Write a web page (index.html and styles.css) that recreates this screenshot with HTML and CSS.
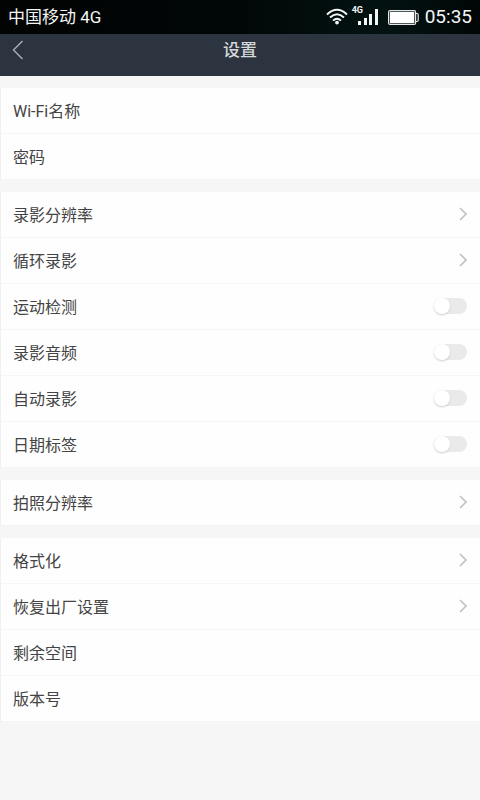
FILE: index.html
```html
<!DOCTYPE html>
<html lang="zh-CN">
<head>
<meta charset="utf-8">
<meta name="viewport" content="width=device-width, initial-scale=1">
<title>设置</title>
<link rel="stylesheet" href="styles.css">
</head>
<body>
<div class="status">
  <span class="carrier">中国移动 4G</span>
  <div class="indicators">
    <svg class="wifi" viewBox="0 0 22 18" width="22" height="18" aria-hidden="true">
      <g fill="none" stroke="#f4f6f6" stroke-width="2">
        <path d="M1 6.4Q11-2.8 21 6.4"/>
        <path d="M4 9.6Q11 3 18 9.6"/>
        <path d="M7 12.6Q11 8.8 15 12.6"/>
      </g>
      <circle cx="11" cy="14.6" r="1.9" fill="#f4f6f6"/>
    </svg>
    <div class="signal">
      <span class="network">4G</span>
      <svg viewBox="0 0 20 16" width="20" height="16" aria-hidden="true">
        <path fill="#f4f6f6" d="M0 12h3v4H0zM6 9h3v7H6zM11 5h3v11h-3zM17 0h3v16h-3z"/>
      </svg>
    </div>
    <svg class="battery" viewBox="0 0 31 15" width="31" height="15" aria-hidden="true">
      <rect x=".6" y=".6" width="27" height="13.8" rx="1.5" fill="none" stroke="#e6e8e8" stroke-width="1.2"/>
      <rect x="1.900" y="1.900" width="24.400" height="11.200" fill="#fff"/>
      <path d="M28 3.5h1q1.200 0 1.200 1.200v5.600q0 1.200-1.200 1.200h-1" fill="none" stroke="#e6e8e8" stroke-width="1.2"/>
    </svg>
    <time class="clock">05:35</time>
  </div>
</div>
<header class="bar">
  <button class="back" type="button" aria-label="返回">
    <svg viewBox="0 0 12 20" width="12" height="20" aria-hidden="true"><path d="M10.500 1L1.500 10l9 9" fill="none" stroke="#a9afb5" stroke-width="1.400"/></svg>
  </button>
  <h1 class="title">设置</h1>
</header>
<main class="settings">
  <section class="group">
    <a class="row" href="#wifi">Wi-Fi名称</a>
    <a class="row" href="#password">密码</a>
  </section>
  <section class="group">
    <a class="row" href="#resolution">录影分辨率<svg class="chevron" viewBox="0 0 8 14" width="8" height="14" aria-hidden="true"><path d="M1 1l6 6-6 6"/></svg></a>
    <a class="row" href="#loop">循环录影<svg class="chevron" viewBox="0 0 8 14" width="8" height="14" aria-hidden="true"><path d="M1 1l6 6-6 6"/></svg></a>
    <label class="row">运动检测<input class="switch" type="checkbox" role="switch"></label>
    <label class="row">录影音频<input class="switch" type="checkbox" role="switch"></label>
    <label class="row">自动录影<input class="switch" type="checkbox" role="switch"></label>
    <label class="row">日期标签<input class="switch" type="checkbox" role="switch"></label>
  </section>
  <section class="group">
    <a class="row" href="#photo">拍照分辨率<svg class="chevron" viewBox="0 0 8 14" width="8" height="14" aria-hidden="true"><path d="M1 1l6 6-6 6"/></svg></a>
  </section>
  <section class="group">
    <a class="row" href="#format">格式化<svg class="chevron" viewBox="0 0 8 14" width="8" height="14" aria-hidden="true"><path d="M1 1l6 6-6 6"/></svg></a>
    <a class="row" href="#reset">恢复出厂设置<svg class="chevron" viewBox="0 0 8 14" width="8" height="14" aria-hidden="true"><path d="M1 1l6 6-6 6"/></svg></a>
    <div class="row">剩余空间</div>
    <div class="row">版本号</div>
  </section>
</main>
</body>
</html>
```
FILE: styles.css
```css
* {
  box-sizing: border-box;
}

body {
  margin: 0;
  min-height: 100vh;
  background: #f6f6f6;
  color: #444;
  font-family: Roboto, "Noto Sans CJK SC", sans-serif;
  font-size: 16px;
}

.status {
  display: flex;
  align-items: center;
  justify-content: space-between;
  height: 34px;
  padding: 0 8px;
  background: linear-gradient(90deg, #020303, #010707 50%, #031312 80%, #010606);
  color: #f4f6f6;
}

.carrier {
  font-size: 17px;
  line-height: 34px;
}

.indicators {
  display: flex;
  align-items: center;
}

.signal {
  position: relative;
  display: flex;
  margin: 0 10px;
}

.network {
  position: absolute;
  top: -3px;
  left: -6px;
  font-size: 9px;
  font-weight: 700;
  line-height: 9px;
}

.clock {
  margin-left: 6px;
  font-size: 19px;
  line-height: 34px;
}

.bar {
  display: grid;
  grid-template-columns: 36px 1fr 36px;
  height: 42px;
  background: #2c343f;
}

.back {
  display: flex;
  align-items: flex-start;
  padding: 6px 0 0 12px;
  border: 0;
  background: none;
}

.title {
  margin: 0;
  color: #d5d8db;
  font-size: 17px;
  font-weight: 500;
  line-height: 32px;
  text-align: center;
}

.settings {
  display: flex;
  flex-direction: column;
  gap: 12px;
  padding-top: 12px;
}

.group {
  border-left: 1px solid #f0f0f0;
  background: #fefefe;
}

.row {
  display: flex;
  align-items: center;
  justify-content: space-between;
  height: 46px;
  padding: 0 13px 1px 12px;
  border-bottom: 1px solid #f5f5f5;
  color: inherit;
  text-decoration: none;
}

.chevron {
  fill: none;
  stroke: #c0c0c0;
  stroke-width: 1.6;
}

.switch {
  appearance: none;
  display: flex;
  align-items: center;
  width: 33px;
  height: 16px;
  margin: 0;
  border-radius: 8px;
  background: #eaeaea;
}

.switch::before {
  content: "";
  width: 16px;
  height: 16px;
  border-radius: 50%;
  background: #fff;
  box-shadow: 0 1px 2px #ccc;
}

.switch:checked {
  justify-content: flex-end;
  background: #9fc9a5;
}
```
